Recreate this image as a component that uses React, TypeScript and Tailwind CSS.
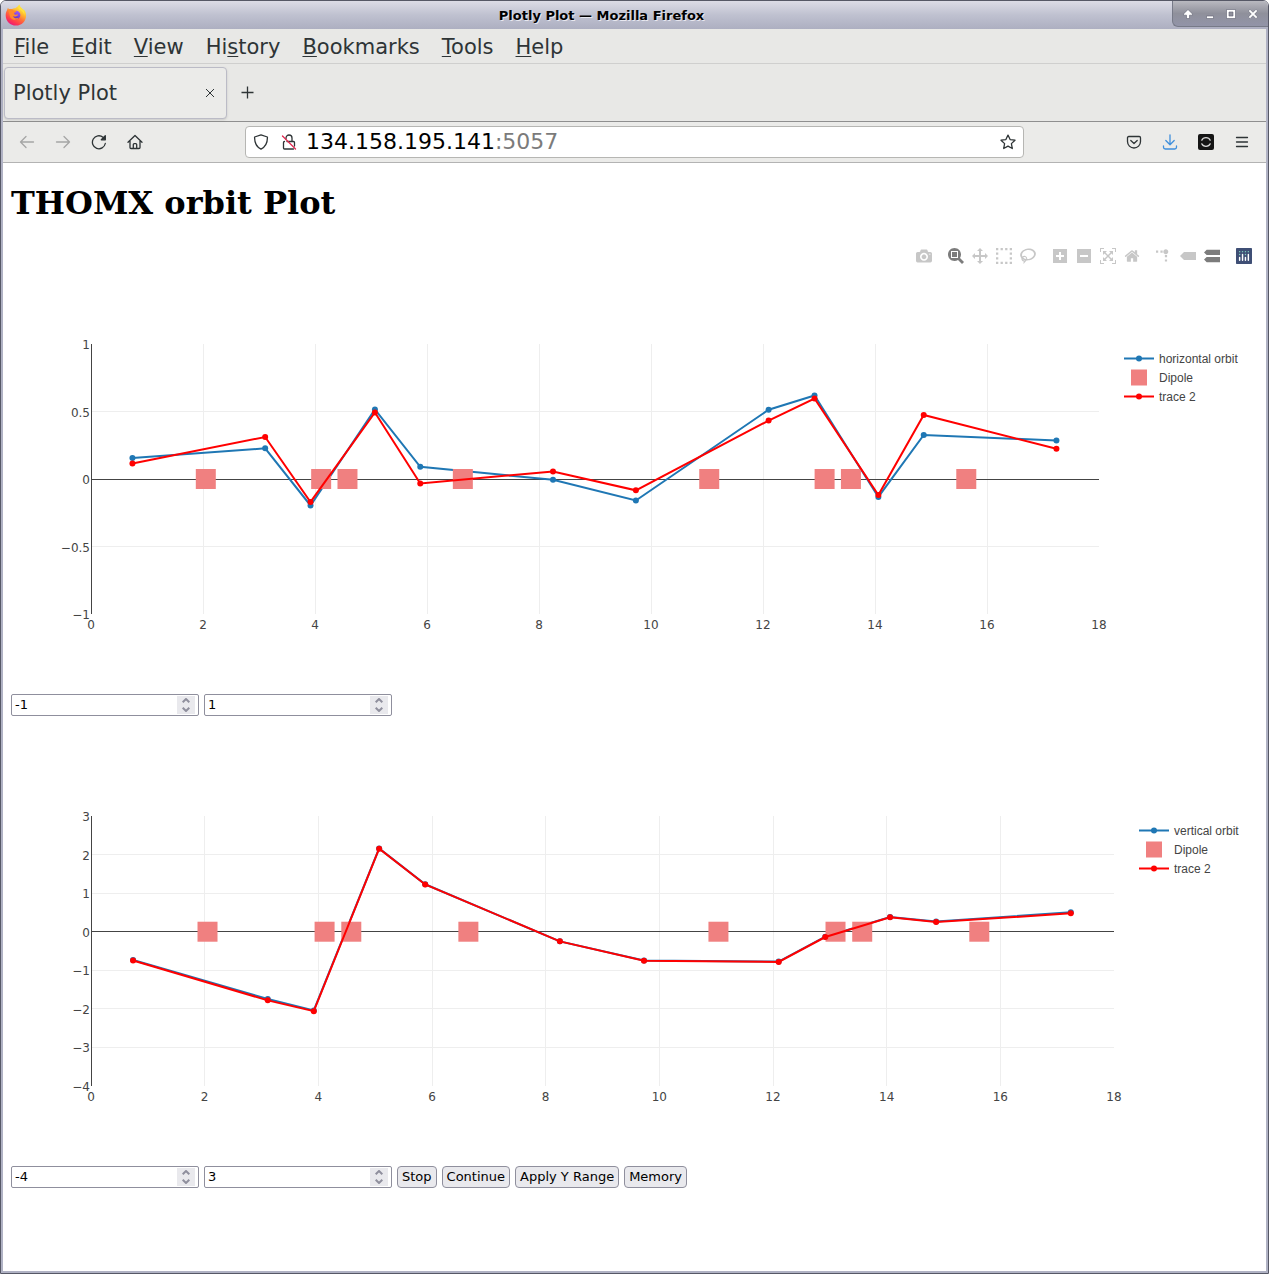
import React, { useState } from "react";

interface Point {
  x: number;
  y: number;
}

interface OrbitChartProps {
  label: string;
  plotWidth: number;
  yMin: number;
  yMax: number;
  yTicks: number[];
  current: number[];
  memory: number[];
}

interface ModeIcon {
  name: string;
  box: string;
  d: string;
  active?: boolean;
  transform?: string;
}

const BPM_X = [0.74, 3.11, 3.92, 5.07, 5.88, 8.25, 9.73, 12.1, 12.92, 14.06, 14.87, 17.24];
const DIPOLE_X = [2.05, 4.11, 4.58, 6.64, 11.04, 13.1, 13.57, 15.63];
const X_TICKS = [0, 2, 4, 6, 8, 10, 12, 14, 16, 18];

const HORIZONTAL = [0.156, 0.227, -0.196, 0.515, 0.09, -0.006, -0.159, 0.513, 0.619, -0.133, 0.326, 0.285];
const HORIZONTAL_MEMORY = [0.115, 0.311, -0.17, 0.493, -0.033, 0.056, -0.084, 0.433, 0.596, -0.119, 0.474, 0.224];
const VERTICAL = [-0.735, -1.745, -2.04, 2.16, 1.23, -0.25, -0.745, -0.775, -0.13, 0.38, 0.262, 0.505];
const VERTICAL_MEMORY = [-0.746, -1.78, -2.06, 2.152, 1.226, -0.25, -0.75, -0.783, -0.137, 0.376, 0.25, 0.477];

// plot margins and size, in svg units
const LEFT = 80;
const TOP = 100;
const PLOT_HEIGHT = 270;

const formatTick = (value: number) => String(value).replace("-", "−");

function Trace({ points, color }: { points: Point[]; color: string }) {
  return (
    <g>
      <polyline points={points.map((p) => `${p.x},${p.y}`).join(" ")} fill="none" stroke={color} strokeWidth={2} />
      {points.map((p) => (
        <circle key={p.x} cx={p.x} cy={p.y} r={3} fill={color} />
      ))}
    </g>
  );
}

function OrbitChart({ label, plotWidth, yMin, yMax, yTicks, current, memory }: OrbitChartProps) {
  const sx = (x: number) => LEFT + (x / 18) * plotWidth;
  const sy = (y: number) => TOP + ((yMax - y) / (yMax - yMin)) * PLOT_HEIGHT;
  const snap = (v: number) => Math.floor(v) + 0.5;
  const toPoints = (values: number[]) => values.map((y, i) => ({ x: sx(BPM_X[i]), y: sy(y) }));

  const legendX = LEFT + plotWidth + 25;
  const legend = [
    { name: label, color: "#1f77b4", y: 114.5 },
    { name: "Dipole", color: "#f08080", y: 133.5 },
    { name: "trace 2", color: "#ff0000", y: 152.5 },
  ];

  return (
    <svg viewBox="0 0 1247 450" role="img" aria-label={label} className="block h-auto w-full">
      <g stroke="#eeeeee" shapeRendering="crispEdges">
        {X_TICKS.filter((t) => t > 0 && t < 18).map((t) => (
          <line key={t} x1={snap(sx(t))} x2={snap(sx(t))} y1={TOP} y2={TOP + PLOT_HEIGHT} />
        ))}
        {yTicks.filter((t) => t > yMin && t < yMax).map((t) => (
          <line key={t} x1={LEFT} x2={LEFT + plotWidth} y1={snap(sy(t))} y2={snap(sy(t))} />
        ))}
      </g>
      <g stroke="#444444" shapeRendering="crispEdges">
        <line x1={snap(LEFT)} x2={snap(LEFT)} y1={TOP} y2={TOP + PLOT_HEIGHT} />
        <line x1={LEFT} x2={LEFT + plotWidth} y1={snap(sy(0))} y2={snap(sy(0))} />
      </g>

      <Trace points={toPoints(current)} color="#1f77b4" />
      {DIPOLE_X.map((x) => (
        <rect key={x} x={sx(x) - 10} y={sy(0) - 10} width={20} height={20} fill="#f08080" />
      ))}
      <Trace points={toPoints(memory)} color="#ff0000" />

      <g fill="#444444" fontSize={12}>
        {X_TICKS.map((t) => (
          <text key={t} x={sx(t)} y={385} textAnchor="middle">{t}</text>
        ))}
        {yTicks.map((t) => (
          <text key={t} x={79} y={sy(t) + 5} textAnchor="end">{formatTick(t)}</text>
        ))}
      </g>

      <g fontSize={12} className="font-['Liberation_Sans',Arial,sans-serif]">
        {legend.map((item) => (
          <g key={item.name}>
            {item.name === "Dipole" ? (
              <rect x={legendX + 7} y={item.y - 8} width={16} height={16} fill={item.color} />
            ) : (
              <>
                <line x1={legendX} x2={legendX + 30} y1={item.y} y2={item.y} stroke={item.color} strokeWidth={2} />
                <circle cx={legendX + 15} cy={item.y} r={3} fill={item.color} />
              </>
            )}
            <text x={legendX + 35} y={item.y + 4} fill="#444444">{item.name}</text>
          </g>
        ))}
      </g>
    </svg>
  );
}

const FLIP = "matrix(1 0 0 -1 0 850)";

const MODEBAR: ModeIcon[][] = [
  [
    { name: "Download plot as a png", box: "0 0 1000 1000", d: "m500 450c-83 0-150-67-150-150 0-83 67-150 150-150 83 0 150 67 150 150 0 83-67 150-150 150z m400 150h-120c-16 0-34 13-39 29l-31 93c-6 15-23 28-40 28h-340c-16 0-34-13-39-28l-31-94c-6-15-23-28-40-28h-120c-55 0-100-45-100-100v-450c0-55 45-100 100-100h800c55 0 100 45 100 100v450c0 55-45 100-100 100z m-400-550c-138 0-250 112-250 250 0 138 112 250 250 250 138 0 250-112 250-250 0-138-112-250-250-250z m365 380c-19 0-35 16-35 35 0 19 16 35 35 35 19 0 35-16 35-35 0-19-16-35-35-35z" },
  ],
  [
    { name: "Zoom", active: true, box: "0 0 1000 1000", d: "m1000-25l-250 251c40 63 63 138 63 218 0 224-182 406-407 406-224 0-406-182-406-406s183-406 407-406c80 0 155 22 218 62l250-250 125 125z m-812 250l0 438 437 0 0-438-437 0z m62 375l313 0 0-312-313 0 0 312z" },
    { name: "Pan", box: "0 0 1000 1000", d: "m1000 350l-187 188 0-125-250 0 0 250 125 0-188 187-187-187 125 0 0-250-250 0 0 125-188-188 186-187 0 125 252 0 0-250-125 0 187-188 188 188-125 0 0 250 250 0 0-126 187 188z" },
    { name: "Box Select", box: "0 0 1000 1000", d: "m0 850l0-143 143 0 0 143-143 0z m286 0l0-143 143 0 0 143-143 0z m285 0l0-143 143 0 0 143-143 0z m286 0l0-143 143 0 0 143-143 0z m-857-286l0-143 143 0 0 143-143 0z m857 0l0-143 143 0 0 143-143 0z m-857-285l0-143 143 0 0 143-143 0z m857 0l0-143 143 0 0 143-143 0z m-857-286l0-143 143 0 0 143-143 0z m286 0l0-143 143 0 0 143-143 0z m285 0l0-143 143 0 0 143-143 0z m286 0l0-143 143 0 0 143-143 0z" },
    { name: "Lasso Select", box: "0 0 1031 1000", d: "m1018 538c-36 207-290 336-568 286-277-48-473-256-436-463 10-57 36-108 76-151-13-66 11-137 68-183 34-28 75-41 114-42l-55-70 0 0c-2-1-3-2-4-3-10-14-8-34 5-45 14-11 34-8 45 4 1 1 2 3 2 5l0 0 113 140c16 11 31 24 45 40 4 3 6 7 8 11 48-3 100 0 151 9 278 48 473 255 436 462z m-624-379c-80 14-149 48-197 96 42 42 109 47 156 9 33-26 47-66 41-105z m-187-74c-19 16-33 37-39 60 50-32 109-55 174-68-42-25-95-24-135 8z m360 75c-34-7-69-9-102-8 8 62-16 128-68 170-73 59-175 54-244-5-9 20-16 40-20 61-28 159 121 317 333 354s407-60 434-217c28-159-121-318-333-355z" },
  ],
  [
    { name: "Zoom in", box: "0 0 875 1000", d: "m1 787l0-875 875 0 0 875-875 0z m687-500l-187 0 0-187-125 0 0 187-188 0 0 125 188 0 0 187 125 0 0-187 187 0 0-125z" },
    { name: "Zoom out", box: "0 0 875 1000", d: "m0 788l0-876 875 0 0 876-875 0z m688-500l-500 0 0 125 500 0 0-125z" },
    { name: "Autoscale", box: "0 0 1000 1000", d: "m250 850l-187 0-63 0 0-62 0-188 63 0 0 188 187 0 0 62z m688 0l-188 0 0-62 188 0 0-188 62 0 0 188 0 62-62 0z m-875-938l0 188-63 0 0-188 0-62 63 0 187 0 0 62-187 0z m875 188l0-188-188 0 0-62 188 0 62 0 0 62 0 188-62 0z m-125 188l-1 0-93-94-156 156 156 156 92-93 2 0 0 250-250 0 0-2 93-92-156-156-156 156 94 92 0 2-250 0 0-250 0 0 93 93 157-156-157-156-93 94 0 0 0-250 250 0 0 0-94 93 156 157 156-157-93-93 0 0 250 0 0 250z" },
    { name: "Reset axes", box: "0 0 928 1000", d: "m786 296v-267q0-15-11-26t-25-10h-214v214h-143v-214h-214q-15 0-25 10t-11 26v267q0 1 0 2t0 2l321 264 321-264q1-1 1-4z m124 39l-34-41q-5-5-12-6h-2q-7 0-12 3l-386 322-386-322q-7-4-13-4-7 2-12 7l-35 41q-4 5-3 13t6 12l401 334q18 15 42 15t43-15l136-114v109q0 8 5 13t13 5h107q8 0 13-5t5-13v-227l122-102q5-5 6-12t-4-13z" },
  ],
  [
    { name: "Toggle Spike Lines", box: "0 0 1000 1000", transform: "matrix(1.5 0 0 -1.5 0 850)", d: "M512 409c0-57-46-104-103-104-57 0-104 47-104 104 0 57 47 103 104 103 57 0 103-46 103-103z m-327-39l92 0 0 92-92 0z m-185 0l92 0 0 92-92 0z m370-186l92 0 0 93-92 0z m0-184l92 0 0 92-92 0z" },
    { name: "Show closest data on hover", box: "0 0 1500 1000", d: "m375 725l0 0-375-375 375-374 0-1 1125 0 0 750-1125 0z" },
    { name: "Compare data on hover", active: true, box: "0 0 1125 1000", d: "m187 786l0 2-187-188 188-187 0 0 937 0 0 373-938 0z m0-499l0 1-187-188 188-188 0 0 937 0 0 376-938-1z" },
  ],
];

function ModeBar() {
  return (
    <div className="absolute top-0 right-[2px] flex gap-2">
      {MODEBAR.map((group, i) => (
        <div key={i} className="flex">
          {group.map((icon) => (
            <button key={icon.name} type="button" aria-label={icon.name} className="flex size-6 items-center justify-center">
              <svg viewBox={icon.box} className={icon.active ? "size-4 fill-[#7c7c7c]" : "size-4 fill-[#c7c7c7]"}>
                <path d={icon.d} transform={icon.transform || FLIP} />
              </svg>
            </button>
          ))}
        </div>
      ))}
      <a href="#plotly" aria-label="Produced with Plotly" className="flex size-6 items-center justify-center">
        <svg viewBox="0 0 132 132" className="size-4">
          <rect width="132" height="132" rx="6" fill="#3f4f75" />
          <g fill="#80cfbe">
            <circle cx="102" cy="30" r="6" />
            <circle cx="78" cy="30" r="6" />
            <circle cx="78" cy="54" r="6" />
            <circle cx="54" cy="30" r="6" />
            <circle cx="30" cy="30" r="6" />
            <circle cx="30" cy="54" r="6" />
          </g>
          <path d="M30 78v24M54 54v48M78 78v24M102 54v48" stroke="#fff" strokeWidth="12" strokeLinecap="round" />
        </svg>
      </a>
    </div>
  );
}

function NumberField({ label, initial }: { label: string; initial: number }) {
  const [value, setValue] = useState(String(initial));
  const step = (by: number) => setValue(String(Number(value) + by));

  return (
    <div className="flex h-[22px] w-[188px] rounded-[2px] border border-[#8f8f9d] bg-white p-px">
      <input
        type="number"
        aria-label={label}
        value={value}
        onChange={(e) => setValue(e.target.value)}
        className="min-w-0 flex-1 px-[2px] text-[13px] leading-4 text-black outline-none [appearance:textfield] [&::-webkit-inner-spin-button]:appearance-none"
      />
      <div className="mr-[2px] flex w-[18px] flex-col bg-[#e9e9ed] text-[#8f8f9d]">
        <button type="button" aria-label={`Increase ${label}`} onClick={() => step(1)} className="flex flex-1 items-end justify-center pb-[2px]">
          <svg viewBox="0 0 8 5" className="h-[5px] w-2" fill="none" stroke="currentColor" strokeWidth="2">
            <path d="M.7 4.3 4 1l3.3 3.3" />
          </svg>
        </button>
        <button type="button" aria-label={`Decrease ${label}`} onClick={() => step(-1)} className="flex flex-1 items-start justify-center pt-[2px]">
          <svg viewBox="0 0 8 5" className="h-[5px] w-2" fill="none" stroke="currentColor" strokeWidth="2">
            <path d="M.7.7 4 4 7.3.7" />
          </svg>
        </button>
      </div>
    </div>
  );
}

function ActionButton({ children }: { children: React.ReactNode }) {
  return (
    <button type="button" className="h-[22px] rounded-[4px] border border-[#8f8f9d] bg-[#e9e9ed] px-1 text-[13px] leading-4 text-black">
      {children}
    </button>
  );
}

function FirefoxLogo() {
  return (
    <svg viewBox="0 0 22 22" className="size-[22px]">
      <defs>
        <linearGradient id="flame" x1="0.8" y1="0.05" x2="0.25" y2="1">
          <stop offset="0" stopColor="#fff44f" />
          <stop offset="0.3" stopColor="#ffc02e" />
          <stop offset="0.55" stopColor="#ff7139" />
          <stop offset="0.8" stopColor="#ff3750" />
          <stop offset="1" stopColor="#e31587" />
        </linearGradient>
        <linearGradient id="globe" x1="0.7" y1="0" x2="0.4" y2="1">
          <stop offset="0" stopColor="#a05cff" />
          <stop offset="1" stopColor="#5b2fc8" />
        </linearGradient>
      </defs>
      <path d="M14.3.4c.4 1.8 1.3 2.9 2.4 3.9.7.5 1.3 1.2 1.8 2 .2-.3.2-.7.1-1 1.7 1.700 2.500 3.700 2.500 6.100C21.100 17 16.700 21.500 11 21.500S.7 17 .7 11.400c0-2 .5-3.800 1.400-5.300.1-.9.5-1.800 1.100-2.300.1.6.3 1.100.6 1.500 1.100-.4 2.200-.5 3.300-.2 1-.9 2.200-1 3.200-.8C11.500 3.300 13 2.200 14.300.4Z" fill="url(#flame)" />
      <circle cx="11.2" cy="11" r="4.2" fill="url(#globe)" />
      <path d="M3.800 5.600c2-.6 3.700-.3 4.900.8 1 .1 2.200.1 2.700.5-.2 1.100-1.400 1.500-2.200 1.900-.3 1.200.3 1.900 1.500 1.900 1 0 1.700-.3 2.500 0-1 1.800-3.500 2.400-5.400 1.300 1 2.300 4 3.100 6 1.600-2.300 3.900-9 2.500-9.300-3C4.300 8.700 3 7.500 3.800 5.600Z" fill="#ff8a2b" />
      <path d="M14.300.4c.4 1.800 1.300 2.900 2.400 3.900 2.300 1.700 3.200 4 2.600 6.700-.5-2.400-2.300-4.300-4.800-5.200-1.500-1.400-1.300-3.500-.2-5.400Z" fill="#ffe23d" />
    </svg>
  );
}

function TitleBar() {
  const controls = [
    { name: "Shade", d: "M6 1.500 1.500 6v1.200h3v3.300h3V7.200h3V6Z" },
    { name: "Minimize", d: "M2.500 8h7v2.500h-7Z" },
    { name: "Maximize", d: "M1.500 1.500h9v9h-9ZM4 4v4h4V4Z" },
    { name: "Close", d: "M3 1.300l3 3 3-3L10.700 3l-3 3 3 3L9 10.700l-3-3-3 3L1.300 9l3-3-3-3Z" },
  ];

  return (
    <header className="flex h-7 items-start rounded-t-[5px] bg-linear-to-b from-[#dcdce6] via-[#bfc1d0] via-50% to-[#adafc1]">
      <div className="flex h-7 w-[30px] items-center pl-1">
        <FirefoxLogo />
      </div>
      <h1 className="flex-1 pt-px text-center text-[13px] leading-7 font-bold text-black [text-shadow:1px_1px_0_#e8e8f0]">Plotly Plot — Mozilla Firefox</h1>
      <div className="flex h-[26px] w-24 items-center justify-around rounded-tr-[5px] rounded-bl-[6px] border-b border-l border-[#777a88] bg-linear-to-b from-[#b9b9c0] via-[#8f909b] to-[#9294a8] px-1 pt-px">
        {controls.map((c) => (
          <button key={c.name} type="button" aria-label={c.name}>
            <svg viewBox="0 0 12 12" className="size-3" fill="#fff" stroke="#5e6070" strokeWidth=".6" fillRule="evenodd">
              <path d={c.d} />
            </svg>
          </button>
        ))}
      </div>
    </header>
  );
}

function MenuBar() {
  const menus = [
    ["", "F", "ile"],
    ["", "E", "dit"],
    ["", "V", "iew"],
    ["Hi", "s", "tory"],
    ["", "B", "ookmarks"],
    ["", "T", "ools"],
    ["", "H", "elp"],
  ];

  return (
    <nav className="flex h-[35px] items-center gap-[22px] border-b border-[#cfcfce] bg-[#e8e8e6] pt-[2px] pl-[11px] text-[21px] leading-6 text-[#2e3436]">
      {menus.map(([before, key, after]) => (
        <button key={key + after} type="button">
          {before}
          <span className="underline decoration-1 underline-offset-2">{key}</span>
          {after}
        </button>
      ))}
    </nav>
  );
}

function NavIcon({ name, className, children }: { name: string; className?: string; children: React.ReactNode }) {
  return (
    <button type="button" aria-label={name} className={`flex h-9 w-9 items-center justify-center ${className || "text-[#2e3436]"}`}>
      <svg viewBox="0 0 16 16" className="size-4" fill="none" stroke="currentColor" strokeWidth="1.3" strokeLinecap="round" strokeLinejoin="round">
        {children}
      </svg>
    </button>
  );
}

function NavBar() {
  return (
    <div className="flex h-[41px] items-center border-b border-[#b3b3b3] bg-[#ebebe9] px-[6px]">
      <NavIcon name="Back" className="text-[#a5a6a5]">
        <path d="M14.5 8h-13M7 2.500 1.500 8 7 13.500" />
      </NavIcon>
      <NavIcon name="Forward" className="text-[#a5a6a5]">
        <path d="M1.500 8h13M9 2.500 14.500 8 9 13.500" />
      </NavIcon>
      <NavIcon name="Reload">
        <path d="M14.300 9.500A6.500 6.500 0 1 1 12 3.200" />
        <path d="M14.300 1.800v4H10.300Z" fill="currentColor" />
      </NavIcon>
      <NavIcon name="Home">
        <path d="M1 8.200 8 1.500l7 6.700M3 7v6.500c0 .6.4 1 1 1h8c.6 0 1-.4 1-1V7M6.300 14.300v-3.800c0-.5.4-.9.9-.9h1.600c.5 0 .9.4.9.9v3.800" />
      </NavIcon>

      <div className="mx-23 flex h-8 min-w-0 flex-1 items-center rounded-[4px] border border-[#b6b6b3] bg-white">
        <div className="flex w-[60px] shrink-0 items-center gap-3 pl-[7px]">
          <svg viewBox="0 0 16 16" className="size-4" fill="none" stroke="#2e3436" strokeWidth="1.3" strokeLinejoin="round">
            <path d="M8 .9 14.400 3c.2 5-1.200 9.600-6.400 12.200C2.800 12.600 1.400 8 1.600 3Z" />
          </svg>
          <svg viewBox="0 0 16 16" className="size-4" fill="none" stroke="#2e3436" strokeWidth="1.3" strokeLinecap="round">
            <path d="M5 5V4a3 3 0 0 1 6 0v3.500h1.500c.6 0 1 .4 1 1V12M3.500 7.500c-.6 0-1 .4-1 1V14c0 .6.4 1 1 1h9M6 7.500h5" />
            <path d="m1.500 2 13 13" stroke="#e22850" />
          </svg>
        </div>
        <div className="relative min-w-0 flex-1 text-[22px] leading-[30px]">
          <input type="text" aria-label="Address" defaultValue="134.158.195.141:5057" className="w-full bg-transparent text-transparent caret-black outline-none" />
          <span aria-hidden="true" className="pointer-events-none absolute inset-0 text-black">
            134.158.195.141<span className="text-[#7b7b7b]">:5057</span>
          </span>
        </div>
        <button type="button" aria-label="Bookmark this page" className="px-[7px]">
          <svg viewBox="0 0 16 16" className="size-4" fill="none" stroke="#2e3436" strokeWidth="1.3" strokeLinejoin="round">
            <path d="m8 1.100 2.100 4.500 4.900.6-3.600 3.400.9 4.900L8 12.100l-4.300 2.400.9-4.900L1 6.200l4.900-.6Z" />
          </svg>
        </button>
      </div>

      <NavIcon name="Save to Pocket">
        <path d="M2.800 2.500h10.400c.8 0 1.300.5 1.300 1.300v3.700a6.500 6.500 0 0 1-13 0V3.800c0-.8.5-1.300 1.300-1.300ZM4.800 6.500 8 9.500l3.200-3" />
      </NavIcon>
      <NavIcon name="Downloads" className="text-[#3f8fdc]">
        <path d="M8 .8v9.700M3.800 6.500 8 10.700l4.200-4.200M1.500 12v1.200c0 1 .8 1.800 1.800 1.800h9.400c1 0 1.800-.8 1.800-1.800V12" />
      </NavIcon>
      <NavIcon name="Extension">
        <rect width="16" height="16" rx="2" fill="#151515" stroke="none" />
        <path d="M3.800 6.200C5.200 2.800 10.800 2.800 12.200 6.200M3.800 9.800c1.400 3.400 7 3.400 8.400 0" stroke="#d8d8d8" />
      </NavIcon>
      <NavIcon name="Open application menu">
        <path d="M2.500 3.500h11M2.500 8h11M2.500 12.500h11" />
      </NavIcon>
    </div>
  );
}

function TabStrip() {
  return (
    <div className="flex h-[58px] items-center border-b border-[#8f8f8f] bg-[#e8e8e6] pl-px text-[#2e3436]">
      <div className="flex h-[52px] w-[223px] items-center justify-between rounded-[4px] border border-[#bbbbc6] bg-[#ebebe9] pr-3 pl-2 shadow-sm">
        <span className="text-[21px] leading-6">Plotly Plot</span>
        <button type="button" aria-label="Close tab">
          <svg viewBox="0 0 8 8" className="size-2" stroke="currentColor">
            <path d="m0 0 8 8M8 0 0 8" />
          </svg>
        </button>
      </div>
      <button type="button" aria-label="New tab" className="ml-[14px]">
        <svg viewBox="0 0 13 13" className="size-[13px]" stroke="currentColor" strokeWidth="1.3">
          <path d="M6.500.5v12M.5 6.500h12" />
        </svg>
      </button>
    </div>
  );
}

export default function App() {
  return (
    <div className="flex min-h-screen flex-col rounded-t-[6px] border border-[#565866] bg-white font-['DejaVu_Sans',Verdana,sans-serif]">
      <TitleBar />
      <div className="flex flex-1 flex-col border-x-2 border-b-2 border-[#b0b2c4]">
        <MenuBar />
        <TabStrip />
        <NavBar />

        <main className="flex-1 px-2 pt-[21px]">
          <h2 className="mb-[22px] font-['DejaVu_Serif',serif] text-[32px] leading-[38px] font-bold text-black">THOMX orbit Plot</h2>

          <section className="relative">
            <OrbitChart
              label="horizontal orbit"
              plotWidth={1008}
              yMin={-1}
              yMax={1}
              yTicks={[-1, -0.5, 0, 0.5, 1]}
              current={HORIZONTAL}
              memory={HORIZONTAL_MEMORY}
            />
            <ModeBar />
          </section>
          <div className="flex flex-wrap gap-[5px]">
            <NumberField label="horizontal minimum" initial={-1} />
            <NumberField label="horizontal maximum" initial={1} />
          </div>

          <section>
            <OrbitChart
              label="vertical orbit"
              plotWidth={1023}
              yMin={-4}
              yMax={3}
              yTicks={[-4, -3, -2, -1, 0, 1, 2, 3]}
              current={VERTICAL}
              memory={VERTICAL_MEMORY}
            />
          </section>
          <div className="flex flex-wrap gap-[5px]">
            <NumberField label="vertical minimum" initial={-4} />
            <NumberField label="vertical maximum" initial={3} />
            <ActionButton>Stop</ActionButton>
            <ActionButton>Continue</ActionButton>
            <ActionButton>Apply Y Range</ActionButton>
            <ActionButton>Memory</ActionButton>
          </div>
        </main>
      </div>
    </div>
  );
}
